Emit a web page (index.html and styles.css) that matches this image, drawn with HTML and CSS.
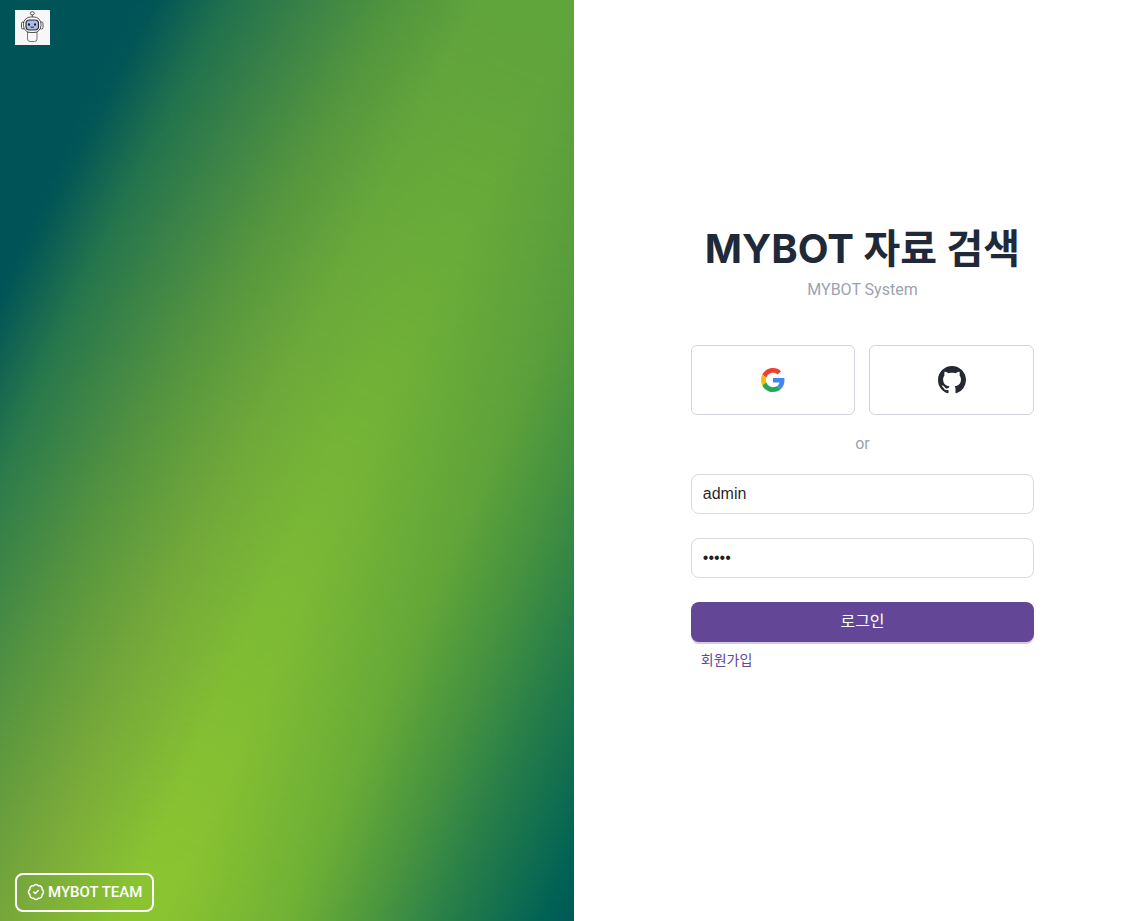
FILE: index.html
```html
<!DOCTYPE html>
<html lang="ko">
<head>
<meta charset="utf-8">
<meta name="viewport" content="width=device-width, initial-scale=1">
<title>MYBOT 자료 검색</title>
<link rel="stylesheet" href="styles.css">
</head>
<body>
<div class="page">
  <aside class="hero">
    <svg class="logo" viewBox="0 0 35 35" role="img" aria-label="MYBOT">
      <rect width="35" height="35" fill="#f7f7f7"/>
      <g fill="#fff" stroke="#2b2b30" stroke-width="0.8">
        <path d="M12.500 22h9.500v7q0 2.500-2.500 2.500h-4.500q-2.500 0-2.500-2.500z" fill="#f7f7f7" stroke="#55555a"/>
        <path d="M17.300 7V4.500"/>
        <ellipse cx="17.300" cy="3.300" rx="2" ry="1.600"/>
        <rect x="6.500" y="12" width="3" height="7" rx="1.500"/>
        <rect x="25" y="12" width="3" height="7" rx="1.500"/>
        <rect x="8.500" y="7" width="17.500" height="15.500" rx="7"/>
        <rect x="11" y="10" width="12.500" height="10" rx="3.500" fill="#a9bdec" stroke-width="1.200"/>
      </g>
      <g fill="#17171c">
        <rect x="13" y="13.500" width="2" height="2"/>
        <rect x="19" y="13.500" width="2" height="2"/>
        <path d="M15 16.500h4.500l-1 1.500h-2.500z" fill="#50546a"/>
      </g>
    </svg>
    <div class="team">
      <svg class="team-icon" viewBox="0 0 24 24" aria-hidden="true">
        <path d="M3.850 8.620a4 4 0 0 1 4.780-4.770 4 4 0 0 1 6.740 0 4 4 0 0 1 4.780 4.780 4 4 0 0 1 0 6.740 4 4 0 0 1-4.770 4.780 4 4 0 0 1-6.750 0 4 4 0 0 1-4.780-4.770 4 4 0 0 1 0-6.760z"/>
        <path d="m9 12 2 2 4-4"/>
      </svg>
      <span>MYBOT TEAM</span>
    </div>
  </aside>
  <main class="content">
    <form class="login">
      <h1 class="title">MYBOT 자료 검색</h1>
      <p class="subtitle">MYBOT System</p>
      <div class="providers">
        <button class="provider" type="button" aria-label="Google">
          <svg class="google" viewBox="0 0 48 48" aria-hidden="true">
            <path fill="#ea4335" d="M24 9.500c3.540 0 6.710 1.220 9.210 3.600l6.850-6.850C35.900 2.380 30.470 0 24 0 14.620 0 6.510 5.380 2.560 13.220l7.980 6.190C12.430 13.720 17.740 9.500 24 9.500z"/>
            <path fill="#4285f4" d="M46.980 24.550c0-1.570-.15-3.090-.38-4.550H24v9.020h12.940c-.58 2.960-2.260 5.480-4.780 7.180l7.730 6c4.510-4.180 7.090-10.360 7.090-17.650z"/>
            <path fill="#fbbc05" d="M10.530 28.590c-.48-1.450-.76-2.990-.76-4.590s.27-3.140.76-4.590l-7.980-6.190C.92 16.460 0 20.120 0 24c0 3.880.92 7.540 2.560 10.780l7.970-6.190z"/>
            <path fill="#25a855" d="M24 48c6.480 0 11.930-2.130 15.890-5.810l-7.730-6c-2.150 1.450-4.920 2.300-8.160 2.300-6.260 0-11.570-4.220-13.470-9.910l-7.980 6.190C6.510 42.620 14.620 48 24 48z"/>
          </svg>
        </button>
        <button class="provider" type="button" aria-label="GitHub">
          <svg class="github" viewBox="0 0 16 16" aria-hidden="true">
            <path d="M8 0C3.580 0 0 3.580 0 8c0 3.540 2.290 6.530 5.470 7.590.4.070.55-.17.55-.38 0-.19-.01-.82-.01-1.490-2.010.37-2.530-.49-2.690-.94-.09-.23-.48-.94-.82-1.130-.28-.15-.68-.52-.01-.53.63-.01 1.080.58 1.230.82.72 1.210 1.870.87 2.330.66.07-.52.28-.87.51-1.070-1.780-.2-3.640-.89-3.640-3.950 0-.87.31-1.590.82-2.150-.08-.2-.36-1.020.08-2.120 0 0 .67-.21 2.200.82.64-.18 1.320-.27 2-.27s1.360.09 2 .27c1.530-1.040 2.200-.82 2.200-.82.44 1.100.16 1.920.08 2.120.51.56.82 1.270.82 2.150 0 3.070-1.870 3.750-3.650 3.950.29.25.54.73.54 1.480 0 1.070-.01 1.930-.01 2.200 0 .21.15.46.55.38A8.010 8.010 0 0 0 16 8c0-4.420-3.580-8-8-8z"/>
          </svg>
        </button>
      </div>
      <p class="divider">or</p>
      <input class="field" type="text" value="admin" aria-label="아이디" autocomplete="username">
      <input class="field" type="password" value="admin" aria-label="비밀번호" autocomplete="current-password">
      <button class="submit" type="submit">로그인</button>
      <a class="signup" href="#signup">회원가입</a>
    </form>
  </main>
</div>
</body>
</html>
```
FILE: styles.css
```css
*,
*::before {
  box-sizing: border-box;
}

body {
  margin: 0;
  background: #fff;
  color: #1f2937;
  font-family: Roboto, "Noto Sans CJK KR", sans-serif;
  font-size: 16px;
}

.page {
  display: grid;
  grid-template-columns: 287fr 285fr;
  min-height: 100vh;
}

.hero {
  position: relative;
  isolation: isolate;
  display: flex;
  flex-direction: column;
  justify-content: space-between;
  align-items: flex-start;
  padding: 10px 15px 9px;
  background: linear-gradient(117deg, #005457 0%, #005457 15%, #1f704e 22%, #3a8248 30%, #4f943f 37%, #60a43c 46%, #60a43c 56%, #4f963f 70%, #388943 78%, #1d774b 87%, #006255 97%, #005857 100%);
}

/* Brighter pass that fades out towards the top */
.hero::before {
  content: "";
  position: absolute;
  inset: 0;
  z-index: -1;
  background: linear-gradient(114deg, #005457 0%, #005457 13%, #32804a 22%, #5b973f 33%, #7aa93a 43%, #8ac431 54%, #8bc431 58%, #70b135 71%, #4f993e 79%, #2d8248 86%, #006255 97%, #005857 100%);
  mask-image: linear-gradient(22deg, #000 10%, transparent 95%);
}

.logo {
  display: block;
  width: 35px;
  height: 35px;
}

.team {
  display: flex;
  align-items: center;
  gap: 3px;
  height: 39px;
  padding: 0 10px 2px;
  border: 2px solid #fff;
  border-radius: 8px;
  color: #fff;
  font-size: 15px;
  font-weight: 500;
}

.team-icon {
  width: 18px;
  height: 18px;
  fill: none;
  stroke: #fff;
  stroke-width: 2;
  stroke-linecap: round;
  stroke-linejoin: round;
}

.content {
  display: flex;
  justify-content: center;
  align-items: center;
  padding: 0 0 30px 7px;
}

.login {
  display: flex;
  flex-direction: column;
  width: 61%;
}

.title {
  margin: 0;
  color: #1f2937;
  font-family: Inter, "Noto Sans CJK KR", sans-serif;
  font-size: 40px;
  font-weight: 700;
  line-height: 56px;
  text-align: center;
  white-space: nowrap;
}

.subtitle,
.divider {
  margin: 0;
  color: #9ca3af;
  font-weight: 400;
  line-height: 26px;
  text-align: center;
}

.providers {
  display: grid;
  grid-template-columns: 1fr 1fr;
  gap: 14px;
  margin: 42px 0 16px;
}

.provider {
  display: flex;
  justify-content: center;
  align-items: center;
  height: 70px;
  padding: 0;
  border: 1px solid #d1d5db;
  border-radius: 6px;
  background: #fff;
}

.google {
  width: 24px;
  height: 24px;
}

.github {
  width: 28px;
  height: 28px;
  fill: #24292f;
}

.field {
  width: 100%;
  height: 40px;
  margin-bottom: 24px;
  padding: 0 11px;
  border: 1px solid #d9d9d9;
  border-radius: 8px;
  background: #fff;
  color: rgba(0, 0, 0, 0.88);
  font-family: "Liberation Sans", sans-serif;
  font-size: 16px;
}

.divider {
  margin-bottom: 17px;
}

.submit {
  height: 40px;
  padding: 0 0 4px;
  border: 0;
  border-radius: 8px;
  background: #634696;
  box-shadow: 0 2px 0 #d2cade;
  color: #fff;
  font-family: inherit;
  font-size: 16px;
}

.signup {
  align-self: flex-start;
  margin: 8px 10px 0;
  color: #634696;
  font-size: 14px;
  line-height: 20px;
  text-decoration: none;
}
```
